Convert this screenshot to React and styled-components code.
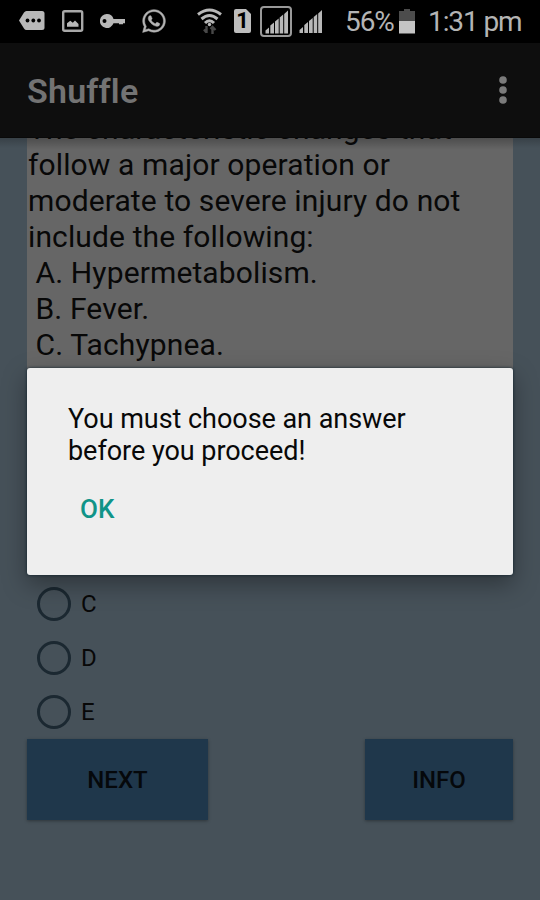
import React from "react";
import styled, { createGlobalStyle } from "styled-components";
import { FaWhatsapp } from "react-icons/fa";

const lines = [
  "The characteristic changes that",
  "follow a major operation or",
  "moderate to severe injury do not",
  "include the following:",
  " A. Hypermetabolism.",
  " B. Fever.",
  " C. Tachypnea.",
];

const choices = ["C", "D", "E"];

const SignalBars = () => (
  <>
    <path d="M0.500 23v-3l3.500-3v6z" />
    <path d="M5.300 23v-8l3.700-3v11z" />
    <path d="M10 23V11l3.700-3v15z" />
    <path d="M14.700 23V7l3.500-3v19z" />
    <path d="M19.200 23V3.500L23 0v23z" />
  </>
);

const StatusIcons = () => (
  <>
    <Icon $left={19} width="26" height="20" viewBox="0 0 26 20">
      <path d="M7.500 0H23q2.500 0 2.500 2.500v14Q25.500 19 23 19H7.500Q6 19 5 17.500L0 9.500 5 1.500Q6 0 7.500 0z" />
      <g fill="#000">
        <circle cx="8.500" cy="9.500" r="1.900" />
        <circle cx="14.300" cy="9.500" r="1.900" />
        <circle cx="20" cy="9.500" r="1.900" />
      </g>
    </Icon>
    <Icon $left={17} width="22" height="22" viewBox="0 0 22 22">
      <rect x="1.200" y="1.200" width="19" height="19.500" rx="1.500" fill="none" stroke="#a8a8a8" strokeWidth="2.400" />
      <path d="M5 16.800v-3.500l3.300-2.500 2.500 2 2.200-2.300 3.500 3.500v2.800z" />
    </Icon>
    <Icon $left={16} width="27" height="15" viewBox="0 0 27 15">
      <path
        fillRule="evenodd"
        d="M7 0a7 7 0 0 1 6.500 5H25v4.300h-2v1h-4v-1h-5.500A7 7 0 1 1 7 0zM4.500 5a2 2 0 1 0 0 4 2 2 0 0 0 0-4z"
      />
    </Icon>
    <WhatsApp />
    <Icon $left={30} width="25" height="27" viewBox="0 0 25 27">
      <g fill="none" stroke="#b8b8b8" strokeWidth="3">
        <path d="M1 6.500Q12.500-2.500 24 6.500" />
        <path d="M4.500 11Q12.500 4 20.500 11" />
        <path d="M8 15Q12.500 10.500 17 15" />
      </g>
      <circle cx="12.500" cy="16.500" r="1.700" />
      <g fill="none" stroke="#484848" strokeWidth="2.400">
        <path d="M9.500 18v7M7 21.500l2.500 3" />
        <path d="M15.500 26v-7M18.500 22l-3-3-2 2" />
      </g>
    </Icon>
    <SimCard>1</SimCard>
    <Icon $left={9} width="32" height="31" viewBox="0 0 32 31">
      <rect x="1" y="1" width="30" height="29" rx="3" fill="none" stroke="#999" strokeWidth="2" />
      <g transform="translate(5 4.500)">
        <SignalBars />
      </g>
    </Icon>
    <Icon $left={7} width="24" height="23" viewBox="0 0 24 23">
      <SignalBars />
    </Icon>
  </>
);

const App = () => {
  return (
    <Screen>
      <GlobalStyle />
      <StatusBar>
        <StatusIcons />
        <Percent>56%</Percent>
        <Icon $left={6} width="17" height="25" viewBox="0 0 17 25">
          <path d="M5 0h6v2h5v10H0V2h5z" fill="#4c4c4c" />
          <path d="M0 12h16v12.500H0z" fill="#c4c4c4" />
        </Icon>
        <Clock>1:31 pm</Clock>
      </StatusBar>
      <AppBar>
        <Title>Shuffle</Title>
        <MenuButton aria-label="More options">
          <svg width="8" height="28" viewBox="0 0 8 28" fill="#7b7b7b">
            <circle cx="4" cy="4" r="3.800" />
            <circle cx="4" cy="14" r="3.800" />
            <circle cx="4" cy="24" r="3.800" />
          </svg>
        </MenuButton>
      </AppBar>
      <Content>
        <Question>
          {lines.map((line) => (
            <p key={line}>{line}</p>
          ))}
        </Question>
        <Choices>
          {choices.map((choice) => (
            <Choice key={choice}>
              <Radio />
              {choice}
            </Choice>
          ))}
        </Choices>
        <Actions>
          <ActionButton $width={181}>NEXT</ActionButton>
          <ActionButton $width={148}>INFO</ActionButton>
        </Actions>
      </Content>
      <Dialog role="alertdialog">
        <Message>
          You must choose an answer
          <br />
          before you proceed!
        </Message>
        <OkButton>OK</OkButton>
      </Dialog>
    </Screen>
  );
};

const GlobalStyle = createGlobalStyle`
  * {
    box-sizing: border-box;
  }
  body {
    margin: 0;
    background: #465159;
  }
  p, h1 {
    margin: 0;
  }
  button {
    border: 0;
    padding: 0;
    font-family: inherit;
  }
`;
const Screen = styled.div`
  position: relative;
  display: flex;
  flex-direction: column;
  width: 540px;
  height: 900px;
  overflow: hidden;
  background: #465159;
  font-family: Roboto, sans-serif;
  color: #080808;
`;
const StatusBar = styled.div`
  display: flex;
  align-items: center;
  flex: none;
  height: 43px;
  padding-bottom: 1px;
  background: #000;
  color: #b4b4b4;
  font-size: 28px;
  white-space: nowrap;
`;
const Icon = styled.svg`
  flex: none;
  margin-left: ${(props) => props.$left}px;
  fill: #b8b8b8;
`;
const WhatsApp = styled(FaWhatsapp)`
  flex: none;
  width: 26px;
  height: 26px;
  margin-left: 14px;
  color: #b4b4b4;
  stroke: #b4b4b4;
  stroke-width: 10px;
`;
const SimCard = styled.span`
  flex: none;
  width: 17px;
  height: 24px;
  margin-left: 12px;
  border-radius: 2px;
  clip-path: polygon(0 0, 12px 0, 100% 5px, 100% 100%, 0 100%);
  background: #bdbdbd;
  color: #000;
  font-size: 22px;
  font-weight: 700;
  line-height: 24px;
  text-align: center;
`;
const Percent = styled.span`
  flex: none;
  width: 48px;
  margin-left: 22px;
  padding-top: 1px;
  letter-spacing: -1.1px;
`;
const Clock = styled.span`
  margin-left: 12px;
  padding-top: 1px;
  letter-spacing: -1.1px;
`;
const AppBar = styled.header`
  display: flex;
  align-items: center;
  justify-content: space-between;
  flex: none;
  height: 95px;
  padding: 0 33px 0 27px;
  background: #0e0e0e;
  border-bottom: 1px solid #090909;
`;
const Title = styled.h1`
  padding-top: 1px;
  color: #737373;
  font-size: 34px;
  font-weight: 600;
  font-variant-ligatures: none;
  letter-spacing: 0.2px;
`;
const MenuButton = styled.button`
  display: flex;
  background: none;
`;
const Content = styled.main`
  display: flex;
  flex-direction: column;
  flex: 1;
  min-height: 0;
  padding: 0 27px;
  background: linear-gradient(rgba(0, 0, 0, 0.2), transparent 10px) #465159;
`;
const Question = styled.section`
  display: flex;
  flex-direction: column;
  justify-content: flex-end;
  flex: none;
  height: 232px;
  padding: 0 0 7px 1px;
  overflow: hidden;
  background: linear-gradient(rgba(0, 0, 0, 0.25), transparent 12px) #666;
  font-size: 30px;
  line-height: 36px;
  letter-spacing: 0.12px;
  white-space: pre;
`;
const Choices = styled.div`
  flex: none;
  margin-top: 207px;
  padding-left: 10px;
`;
const Choice = styled.label`
  display: flex;
  align-items: center;
  gap: 10px;
  height: 54px;
  font-size: 24px;
`;
const Radio = styled.span`
  width: 34px;
  height: 34px;
  border: 3px solid #1b2831;
  border-radius: 50%;
`;
const Actions = styled.div`
  display: flex;
  justify-content: space-between;
`;
const ActionButton = styled.button`
  width: ${(props) => props.$width}px;
  height: 81px;
  background: #1f374b;
  box-shadow: 0 1px 3px rgba(0, 0, 0, 0.35);
  color: #05080b;
  font-size: 24px;
  font-weight: 500;
`;
const Dialog = styled.div`
  position: absolute;
  top: 368px;
  left: 27px;
  width: 486px;
  height: 207px;
  padding: 35px 41px;
  border-radius: 3px;
  background: #eee;
  box-shadow: 0 0 3px #0c202c, 0 9px 24px rgba(0, 0, 0, 0.35);
`;
const Message = styled.p`
  font-size: 27px;
  line-height: 32px;
  letter-spacing: -0.04px;
  white-space: nowrap;
`;
const OkButton = styled.button`
  display: block;
  margin: 26px 0 0 12px;
  background: none;
  color: #109488;
  font-size: 26px;
  font-weight: 500;
  line-height: 32px;
`;

export default App;
